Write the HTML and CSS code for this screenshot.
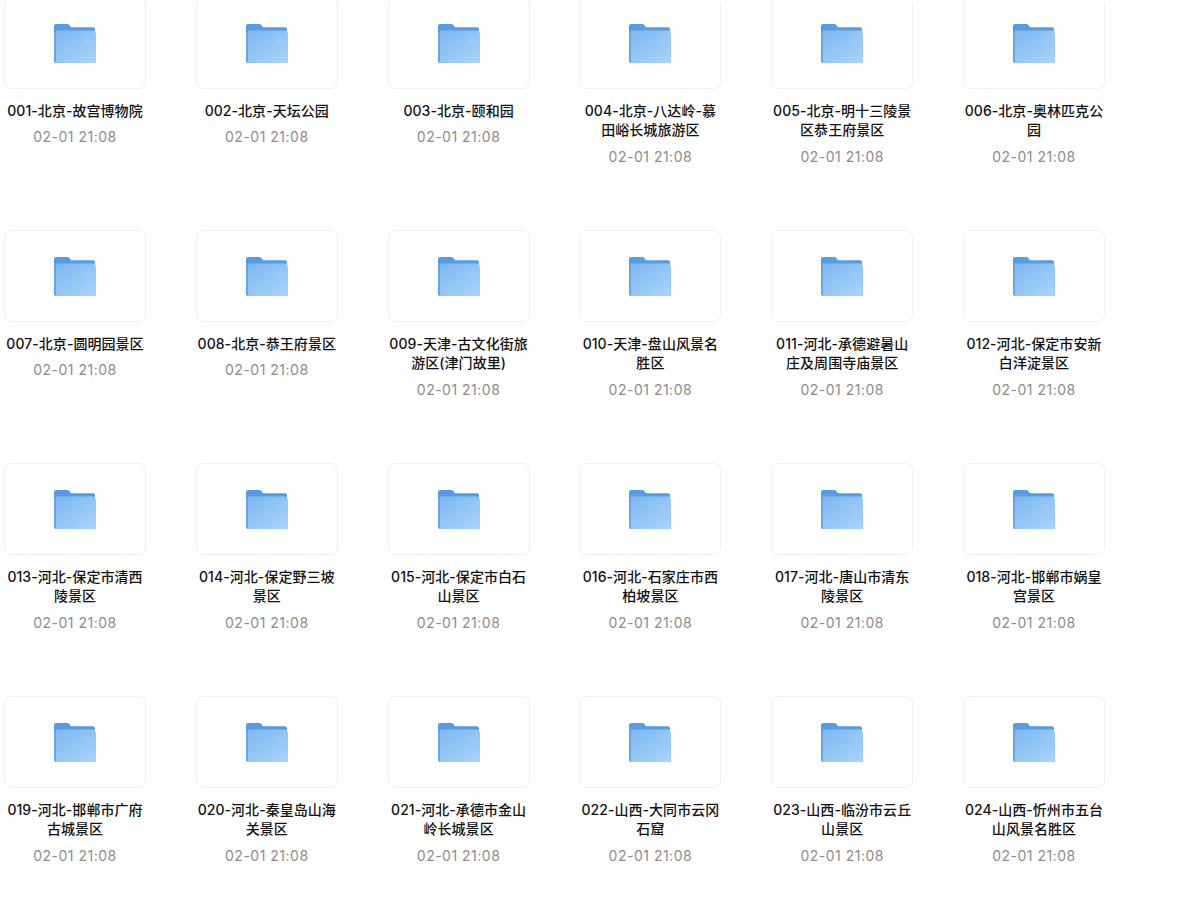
FILE: index.html
```html
<!DOCTYPE html>
<html lang="en">
<head>
  <meta charset="UTF-8">
  <meta name="viewport" content="width=device-width, initial-scale=1.0">
  <title>Folders</title>
  <link rel="stylesheet" href="styles.css">
</head>
<body>
  <!-- Shared folder icon -->
  <svg class="icon-defs" width="0" height="0">
    <defs>
      <linearGradient id="folderFront" x1="0.1" y1="0" x2="0.9" y2="1">
        <stop offset="0" stop-color="#80b9ef"/>
        <stop offset="1" stop-color="#a6d3fa"/>
      </linearGradient>
      <symbol id="folder" viewBox="0 0 42 39">
        <path d="M0 2a2 2 0 0 1 2-2h11.500a2 2 0 0 1 1.600.8l2 2.400h21.900a2 2 0 0 1 2 2V12H0z" fill="#539de5"/>
        <path d="M0 8h39.500a2 2 0 0 1 2 2l.5 27.500a1.500 1.500 0 0 1-1.500 1.500H2a2 2 0 0 1-2-2z" fill="#62a7e8"/>
        <path d="M2 6.500h37.500a2 2 0 0 1 2 2l.5 29a1.500 1.500 0 0 1-1.500 1.500H3a1 1 0 0 1-1-1z" fill="url(#folderFront)"/>
        <path d="M30 15.500h6M30 18h6" stroke="#a9cdf0" stroke-width="0.800"/>
      </symbol>
    </defs>
  </svg>

  <div class="file-grid">
    <div class="file-item"><div class="thumb"><svg class="folder-icon"><use href="#folder"/></svg></div><div class="file-name">001-北京-故宫博物院</div><div class="file-date">02-01 21:08</div></div>
    <div class="file-item"><div class="thumb"><svg class="folder-icon"><use href="#folder"/></svg></div><div class="file-name">002-北京-天坛公园</div><div class="file-date">02-01 21:08</div></div>
    <div class="file-item"><div class="thumb"><svg class="folder-icon"><use href="#folder"/></svg></div><div class="file-name">003-北京-颐和园</div><div class="file-date">02-01 21:08</div></div>
    <div class="file-item"><div class="thumb"><svg class="folder-icon"><use href="#folder"/></svg></div><div class="file-name">004-北京-八达岭-慕田峪长城旅游区</div><div class="file-date">02-01 21:08</div></div>
    <div class="file-item"><div class="thumb"><svg class="folder-icon"><use href="#folder"/></svg></div><div class="file-name">005-北京-明十三陵景区恭王府景区</div><div class="file-date">02-01 21:08</div></div>
    <div class="file-item"><div class="thumb"><svg class="folder-icon"><use href="#folder"/></svg></div><div class="file-name">006-北京-奥林匹克公园</div><div class="file-date">02-01 21:08</div></div>

    <div class="file-item"><div class="thumb"><svg class="folder-icon"><use href="#folder"/></svg></div><div class="file-name">007-北京-圆明园景区</div><div class="file-date">02-01 21:08</div></div>
    <div class="file-item"><div class="thumb"><svg class="folder-icon"><use href="#folder"/></svg></div><div class="file-name">008-北京-恭王府景区</div><div class="file-date">02-01 21:08</div></div>
    <div class="file-item"><div class="thumb"><svg class="folder-icon"><use href="#folder"/></svg></div><div class="file-name">009-天津-古文化街旅游区(津门故里)</div><div class="file-date">02-01 21:08</div></div>
    <div class="file-item"><div class="thumb"><svg class="folder-icon"><use href="#folder"/></svg></div><div class="file-name">010-天津-盘山风景名胜区</div><div class="file-date">02-01 21:08</div></div>
    <div class="file-item"><div class="thumb"><svg class="folder-icon"><use href="#folder"/></svg></div><div class="file-name">011-河北-承德避暑山庄及周围寺庙景区</div><div class="file-date">02-01 21:08</div></div>
    <div class="file-item"><div class="thumb"><svg class="folder-icon"><use href="#folder"/></svg></div><div class="file-name">012-河北-保定市安新白洋淀景区</div><div class="file-date">02-01 21:08</div></div>

    <div class="file-item"><div class="thumb"><svg class="folder-icon"><use href="#folder"/></svg></div><div class="file-name">013-河北-保定市清西陵景区</div><div class="file-date">02-01 21:08</div></div>
    <div class="file-item"><div class="thumb"><svg class="folder-icon"><use href="#folder"/></svg></div><div class="file-name">014-河北-保定野三坡景区</div><div class="file-date">02-01 21:08</div></div>
    <div class="file-item"><div class="thumb"><svg class="folder-icon"><use href="#folder"/></svg></div><div class="file-name">015-河北-保定市白石山景区</div><div class="file-date">02-01 21:08</div></div>
    <div class="file-item"><div class="thumb"><svg class="folder-icon"><use href="#folder"/></svg></div><div class="file-name">016-河北-石家庄市西柏坡景区</div><div class="file-date">02-01 21:08</div></div>
    <div class="file-item"><div class="thumb"><svg class="folder-icon"><use href="#folder"/></svg></div><div class="file-name">017-河北-唐山市清东陵景区</div><div class="file-date">02-01 21:08</div></div>
    <div class="file-item"><div class="thumb"><svg class="folder-icon"><use href="#folder"/></svg></div><div class="file-name">018-河北-邯郸市娲皇宫景区</div><div class="file-date">02-01 21:08</div></div>

    <div class="file-item"><div class="thumb"><svg class="folder-icon"><use href="#folder"/></svg></div><div class="file-name">019-河北-邯郸市广府古城景区</div><div class="file-date">02-01 21:08</div></div>
    <div class="file-item"><div class="thumb"><svg class="folder-icon"><use href="#folder"/></svg></div><div class="file-name">020-河北-秦皇岛山海关景区</div><div class="file-date">02-01 21:08</div></div>
    <div class="file-item"><div class="thumb"><svg class="folder-icon"><use href="#folder"/></svg></div><div class="file-name">021-河北-承德市金山岭长城景区</div><div class="file-date">02-01 21:08</div></div>
    <div class="file-item"><div class="thumb"><svg class="folder-icon"><use href="#folder"/></svg></div><div class="file-name">022-山西-大同市云冈石窟</div><div class="file-date">02-01 21:08</div></div>
    <div class="file-item"><div class="thumb"><svg class="folder-icon"><use href="#folder"/></svg></div><div class="file-name">023-山西-临汾市云丘山景区</div><div class="file-date">02-01 21:08</div></div>
    <div class="file-item"><div class="thumb"><svg class="folder-icon"><use href="#folder"/></svg></div><div class="file-name">024-山西-忻州市五台山风景名胜区</div><div class="file-date">02-01 21:08</div></div>
  </div>
</body>
</html>
```

FILE: styles.css
```css
body, html {
  margin: 0;
  padding: 0;
  width: 100%;
  height: 100%;
  background-color: #fff;
  overflow: hidden;
}
.icon-defs {
  display: block;
  height: 0;
}
.file-grid {
  display: grid;
  grid-template-columns: repeat(6, 142px);
  grid-auto-rows: 233px;
  column-gap: 49.8px;
  margin-top: -3px;
  padding-left: 4px;
  font-family: Inter, "Noto Sans CJK SC", sans-serif;
}
.file-item {
  display: flex;
  flex-direction: column;
  align-items: center;
}
.thumb {
  box-sizing: border-box;
  width: 142px;
  height: 92px;
  padding-top: 1px;
  border: 1px solid #f0f0f0;
  border-radius: 7px;
  display: flex;
  justify-content: center;
  align-items: center;
}
.folder-icon {
  width: 42px;
  height: 39px;
}
.file-name {
  width: 142px;
  margin-top: 11.600px;
  font-size: 14px;
  line-height: 19.500px;
  font-weight: 500;
  letter-spacing: 0.050px;
  color: #111;
  text-align: center;
}
.file-date {
  margin-top: 7.400px;
  font-size: 14px;
  line-height: 20px;
  letter-spacing: 0.500px;
  color: #8c8c8c;
}
```
